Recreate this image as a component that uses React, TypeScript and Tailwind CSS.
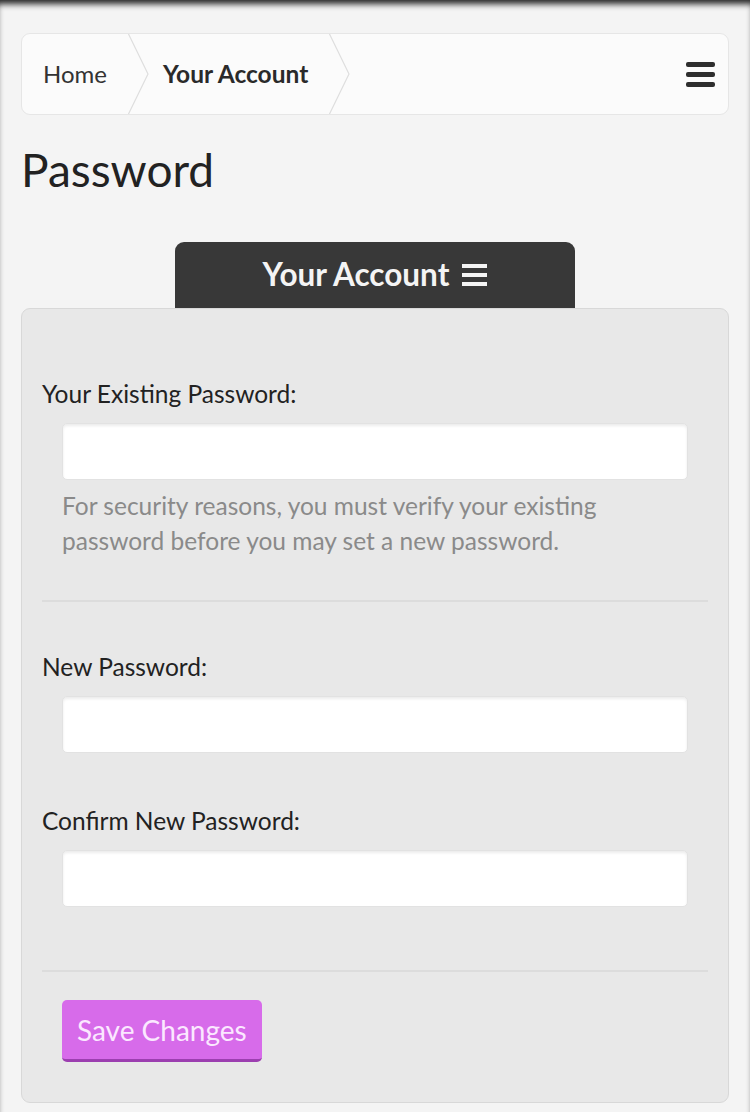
import { useState } from 'react';

// breadcrumb separator: thin chevron that runs the full bar height
function Chevron() {
  return (
    <svg width="22" height="82" viewBox="0 0 22 82" className="shrink-0 block" aria-hidden="true">
      <polyline points="1,0 21,41 1,82" fill="none" stroke="#dedede" strokeWidth="1.2" />
    </svg>
  );
}

function Bars({ className, bar }: { className: string; bar: string }) {
  return (
    <span className={className}>
      <span className={bar} />
      <span className={bar} />
      <span className={bar} />
    </span>
  );
}

function Field({ label, value, onChange }: { label: string; value: string; onChange: (v: string) => void }) {
  return (
    <div>
      <label className="block text-[24.5px] leading-[34px] text-[#222]">{label}</label>
      <div className="px-[20px] mt-[12px]">
        <input
          type="password"
          value={value}
          onChange={(e) => onChange(e.target.value)}
          className="block w-full h-[57px] bg-white rounded-[5px] border border-[#e2e2e2] shadow-[inset_0_2px_3px_rgba(0,0,0,0.08)] outline-none px-3 text-[22px]"
        />
      </div>
    </div>
  );
}

export default function App() {
  const [current, setCurrent] = useState('');
  const [next, setNext] = useState('');
  const [confirm, setConfirm] = useState('');

  return (
    <div className="min-h-[1112px] bg-[#f4f4f4] px-[21px] pt-[33px] pb-[8px] font-['Lato',sans-serif] text-[#222] shadow-[inset_0_7px_6px_-3px_rgba(0,0,0,0.85)]">
      {/* breadcrumb bar */}
      <nav className="flex items-center h-[82px] bg-[#fbfbfb] border border-[#e6e6e6] rounded-[9px] overflow-hidden">
        <a className="pl-[21px] pr-[20px] text-[24px] text-[#333]">Home</a>
        <Chevron />
        <span className="pl-[14px] pr-[20px] text-[24.5px] font-bold text-[#2a2a2a]">Your Account</span>
        <Chevron />
        <div className="flex-1" />
        <Bars className="flex flex-col gap-[5px] mr-[13px] w-[29px]" bar="block h-[5px] rounded-[2px] bg-[#2e2e2e]" />
      </nav>

      <h1 className="mt-[29px] text-[46px] leading-[52px] text-[#222]">Password</h1>

      {/* section tab */}
      <div className="mt-[46px] flex justify-center">
        <div className="w-[400px] h-[66px] bg-[#383838] rounded-t-[9px] flex items-center justify-center gap-[13px] text-[#f4f4f4]">
          <span className="text-[31.5px] font-bold">Your Account</span>
          <Bars className="flex flex-col gap-[5.5px] w-[25px]" bar="block h-[3.5px] bg-[#f4f4f4]" />
        </div>
      </div>

      <form className="bg-[#e8e8e8] border border-[#d8d8d8] rounded-[9px] px-[20px] pt-[68px] pb-[40px]" onSubmit={(e) => e.preventDefault()}>
        <Field label="Your Existing Password:" value={current} onChange={setCurrent} />
        <p className="px-[20px] mt-[8px] text-[24.5px] leading-[35px] text-[#8a8a8a]">
          For security reasons, you must verify your existing password before you may set a new password.
        </p>

        <hr className="mt-[42px] border-0 border-t-2 border-[#dcdcdc]" />

        <div className="mt-[48px]">
          <Field label="New Password:" value={next} onChange={setNext} />
        </div>
        <div className="mt-[51px]">
          <Field label="Confirm New Password:" value={confirm} onChange={setConfirm} />
        </div>

        <hr className="mt-[63px] border-0 border-t-2 border-[#dcdcdc]" />

        <div className="px-[20px] mt-[28px]">
          <button
            type="submit"
            className="h-[62px] px-[15px] rounded-[5px] bg-[#d76bea] border-b-[3px] border-[#9c3fb0] text-[28px] text-[#fbe8ff]"
          >
            Save Changes
          </button>
        </div>
      </form>
    </div>
  );
}
